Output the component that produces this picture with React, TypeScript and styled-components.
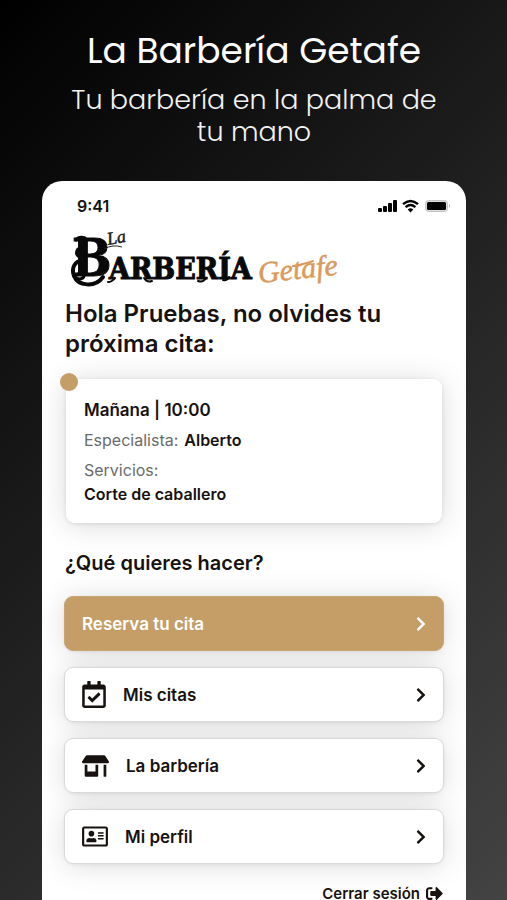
import React from "react";
import styled, { createGlobalStyle } from "styled-components";
import {
  FaChevronRight,
  FaRegAddressCard,
  FaRegCalendarCheck,
  FaSignOutAlt,
  FaStoreAlt,
} from "react-icons/fa";

const GlobalStyle = createGlobalStyle`
  *, *::before, *::after { box-sizing: border-box; }
  body { margin: 0; background: #000; }
  h1, h2, p, dl, dt, dd, ul { margin: 0; padding: 0; }
`;

const ink = "#17120f";
const gold = "#c49e66";

const Page = styled.div`
  display: flex;
  flex-direction: column;
  height: 100vh;
  overflow: hidden;
  padding: 29px 41px 0 42px;
  background: linear-gradient(135deg, #000 0%, #434343 100%);
  font-family: Inter, "Liberation Sans", sans-serif;
  color: ${ink};
`;

const Hero = styled.header`
  flex: none;
  padding-bottom: 33px;
  text-align: center;
  color: #fff;
  font-family: Poppins, Inter, sans-serif;
`;

const HeroTitle = styled.h1`
  font-size: 36px;
  line-height: 44px;
  font-weight: 400;
`;

const HeroText = styled.p`
  max-width: 384px;
  margin: 11px auto 0;
  font-size: 27px;
  line-height: 32px;
  font-weight: 300;
  color: #f2f2f2;
`;

const Phone = styled.main`
  flex: 1 0 auto;
  isolation: isolate;
  overflow: hidden;
  padding: 14px 22px 0;
  border-radius: 20px 20px 0 0;
  background: #fff;
`;

const StatusBar = styled.div`
  display: flex;
  align-items: center;
  justify-content: space-between;
  height: 22px;
  padding: 0 0 0 13px;
  margin-right: -7px;
  font-size: 16px;
  font-weight: 600;
  color: #111;
`;

const StatusIcons = styled.svg`
  display: block;
  width: 74px;
  height: 16px;
`;

const Logo = styled.svg`
  display: block;
  width: 290px;
  height: 68px;
  margin-top: 8px;
`;

const Greeting = styled.h2`
  padding: 0 1px;
  margin-top: 6px;
  font-size: 24px;
  line-height: 30px;
  font-weight: 600;
`;

const Raised = `
  position: relative;
  border-radius: 9px;
  &::before {
    content: "";
    position: absolute;
    inset: 0;
    z-index: -1;
    border-radius: inherit;
    box-shadow: 0 2px 30px rgba(0, 0, 0, 0.15), 0 1px 4px rgba(0, 0, 0, 0.1);
  }
`;

const Appointment = styled.section`
  ${Raised}
  margin: 20px 2px 0;
  padding: 19px 18px 17px;
  background: #fff;
`;

const Dot = styled.span`
  position: absolute;
  top: -6px;
  left: -6px;
  width: 18px;
  height: 18px;
  border-radius: 50%;
  background: ${gold};
`;

const When = styled.p`
  font-size: 17px;
  line-height: 24px;
  font-weight: 600;
`;

const Details = styled.dl`
  font-size: 16px;
  line-height: 24px;
`;

const Detail = styled.div<{ $stacked?: boolean }>`
  display: flex;
  flex-direction: ${(p) => (p.$stacked ? "column" : "row")};
  gap: ${(p) => (p.$stacked ? "0" : "6px")};
  margin-top: 6px;
`;

const Term = styled.dt`
  color: #6b6b6b;
`;

const Value = styled.dd`
  font-weight: 600;
`;

const Question = styled.h2`
  margin: 27px 1px 20px;
  font-size: 20px;
  line-height: 26px;
  font-weight: 600;
`;

const Menu = styled.nav`
  display: flex;
  flex-direction: column;
  gap: 16px;
`;

const MenuButton = styled.button<{ $primary?: boolean }>`
  ${Raised}
  display: flex;
  align-items: center;
  gap: 17px;
  width: 100%;
  height: 55px;
  padding: 0 14px 0 17px;
  border: 1px solid ${(p) => (p.$primary ? "#c9a673" : "#d9d9d9")};
  background: ${(p) => (p.$primary ? gold : "#fff")};
  color: ${(p) => (p.$primary ? "#fff" : ink)};
  font: 600 17px/24px Inter, "Liberation Sans", sans-serif;
  text-align: left;
  cursor: pointer;
`;

const MenuIcon = styled.span<{ $width: number; $height: number }>`
  display: flex;
  flex: none;

  svg {
    width: ${(p) => p.$width}px;
    height: ${(p) => p.$height}px;
  }
`;

const MenuLabel = styled.span`
  flex: 1;
`;

const Logout = styled.button`
  display: flex;
  align-items: center;
  gap: 6px;
  margin: 21px 1px 0 auto;
  padding: 0;
  border: 0;
  background: none;
  color: ${ink};
  font: 600 15px/15px Inter, "Liberation Sans", sans-serif;
  cursor: pointer;
`;

function BrandLogo() {
  return (
    <Logo viewBox="0 0 290 68" role="img" aria-label="La Barbería Getafe">
      <g
        fill="#090909"
        stroke="#090909"
        fontFamily='"DejaVu Serif Condensed", "DejaVu Serif", serif'
        fontWeight="700"
      >
        <text x="8" y="51" fontSize="52" strokeWidth="1">B</text>
        <text x="45" y="54" fontSize="30" strokeWidth="1">ARBERÍA</text>
      </g>
      <g fill="none" stroke="#090909" strokeLinecap="round">
        <path d="M19 36C11 35 7 43 10 51c4 10 21 12 29 1" strokeWidth="4" />
        <path d="M10 51c4 5 11 3 10-2-1-3-4-3-5-1" strokeWidth="3" />
        <path d="M12 15q3-4 9-2M14 31q-3-3 0-7" strokeWidth="3" />
        <path d="M44 57q4 0 7-4M80 53q3 5 8 3M142 53q-3 5-8 3M159 55q4 1 6-3" strokeWidth="2" />
      </g>
      <g fontFamily='"Liberation Serif", serif' fontStyle="italic">
        <text x="44" y="20" fontSize="18" fill="#1c1c1c" stroke="#1c1c1c" strokeWidth="0.500" transform="rotate(-10 44 20)">La</text>
        <text x="195" y="58" fontSize="30" fill="#d99a5b" stroke="#d99a5b" strokeWidth="0.500" transform="rotate(-6 195 58)">Getafe</text>
      </g>
      <path d="M40 24q9-5 18-2" fill="none" stroke="#222" strokeWidth="1" />
      <path d="M229 41q12-2 20-5" fill="none" stroke="#d99a5b" strokeWidth="2" strokeLinecap="round" />
    </Logo>
  );
}

function DeviceStatus() {
  return (
    <StatusIcons viewBox="0 0 74 16" aria-hidden="true">
      <g fill="#000">
        <rect x="1" y="10" width="4" height="4" rx="1" />
        <rect x="6" y="8" width="4" height="6" rx="1" />
        <rect x="11" y="5" width="4" height="9" rx="1" />
        <rect x="16" y="2" width="4" height="12" rx="1" />
        <path d="M33.500 14.500 30.700 11.500Q33.500 9.200 36.300 11.500Z" />
      </g>
      <g fill="none" stroke="#000" strokeWidth="2.400">
        <path d="M26 6.200Q33.500-.4 41 6.200" />
        <path d="M28.600 9.100Q33.500 4.900 38.400 9.100" />
      </g>
      <rect x="48.500" y="2.500" width="22" height="11" rx="3" fill="#ddd" stroke="#c4c4c4" />
      <rect x="50" y="4" width="19" height="8" rx="1.500" fill="#000" />
      <path d="M72 6q2 2 0 4Z" fill="#aaa" />
    </StatusIcons>
  );
}

const items = [
  { label: "Reserva tu cita", icon: null, width: 0, height: 0, primary: true },
  { label: "Mis citas", icon: <FaRegCalendarCheck />, width: 24, height: 27, primary: false },
  { label: "La barbería", icon: <FaStoreAlt />, width: 27, height: 22, primary: false },
  { label: "Mi perfil", icon: <FaRegAddressCard />, width: 26, height: 23, primary: false },
];

export default function App() {
  return (
    <>
      <GlobalStyle />
      <Page>
        <Hero>
          <HeroTitle>La Barbería Getafe</HeroTitle>
          <HeroText>Tu barbería en la palma de tu mano</HeroText>
        </Hero>
        <Phone>
          <StatusBar>
            <span>9:41</span>
            <DeviceStatus />
          </StatusBar>
          <BrandLogo />
          <Greeting>Hola Pruebas, no olvides tu próxima cita:</Greeting>
          <Appointment>
            <Dot />
            <When>Mañana | 10:00</When>
            <Details>
              <Detail>
                <Term>Especialista:</Term>
                <Value>Alberto</Value>
              </Detail>
              <Detail $stacked>
                <Term>Servicios:</Term>
                <Value>Corte de caballero</Value>
              </Detail>
            </Details>
          </Appointment>
          <Question>¿Qué quieres hacer?</Question>
          <Menu>
            {items.map((item) => (
              <MenuButton key={item.label} type="button" $primary={item.primary}>
                {item.icon && (
                  <MenuIcon $width={item.width} $height={item.height}>
                    {item.icon}
                  </MenuIcon>
                )}
                <MenuLabel>{item.label}</MenuLabel>
                <FaChevronRight size={16} />
              </MenuButton>
            ))}
          </Menu>
          <Logout type="button">
            Cerrar sesión
            <FaSignOutAlt size={17} />
          </Logout>
        </Phone>
      </Page>
    </>
  );
}
